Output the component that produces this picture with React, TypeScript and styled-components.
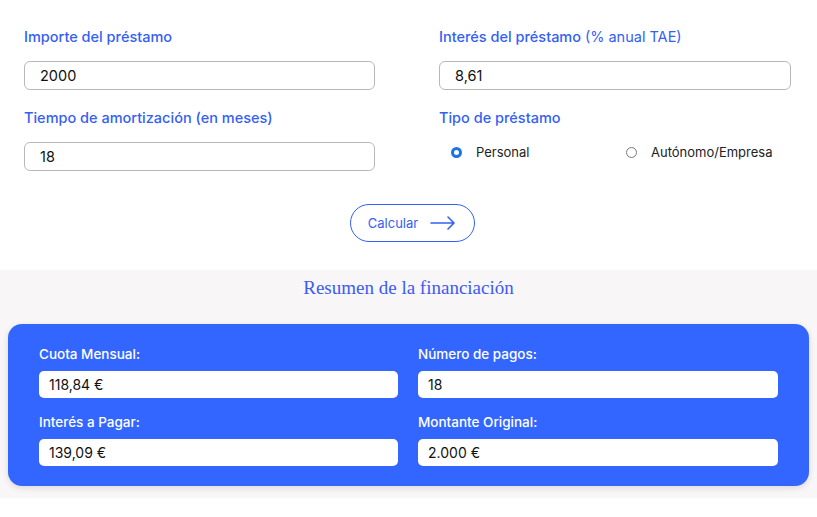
import React from "react";
import styled, { createGlobalStyle } from "styled-components";

const Global = createGlobalStyle`
  body { margin: 0; background: #fff; font-family: Inter, "Noto Sans", sans-serif; }
`;

const Form = styled.div`
  display: grid;
  grid-template-columns: 351px 352px;
  column-gap: 64px;
  padding: 26px 0 0 24px;
`;
const Field = styled.div`
  display: flex;
  flex-direction: column;
  margin-bottom: 17px;
`;
const Label = styled.div`
  color: #3460f5;
  font-size: 14.5px;
  font-weight: 500;
  height: 22px;
  line-height: 22px;
  margin-bottom: 13px;
  span { font-weight: 400; }
`;
const Input = styled.div`
  height: 27px;
  border: 1px solid #b8b8b8;
  border-radius: 6px;
  padding-left: 15px;
  display: flex;
  align-items: center;
  font-size: 14.5px;
  color: #111;
`;
const Radios = styled.div`
  display: grid;
  grid-template-columns: 175px 1fr;
  padding-left: 12px;
  margin-top: 2px;
`;
const Radio = styled.label`
  display: flex;
  align-items: center;
  gap: 14px;
  font-size: 13px;
  color: #222;
`;
const Dot = styled.span<{ $on?: boolean }>`
  width: 11px;
  height: 11px;
  border-radius: 50%;
  box-sizing: border-box;
  border: ${p => (p.$on ? "3px solid #1a73e8" : "1px solid #777")};
  background: #fff;
`;
const ButtonRow = styled.div`
  display: flex;
  justify-content: center;
  margin-top: 16px;
  padding-left: 7px;
`;
const Button = styled.button`
  width: 125px;
  height: 38px;
  border: 1px solid #3460f5;
  border-radius: 19px;
  background: #fff;
  color: #3460f5;
  font-family: Inter, sans-serif;
  font-size: 13px;
  display: flex;
  align-items: center;
  justify-content: center;
  gap: 12px;
`;
const Summary = styled.div`
  margin-top: 28px;
  background: #f8f6f6;
  padding: 6px 8px 8px;
  height: 214px;
`;
const Title = styled.h2`
  margin: 0 0 24px;
  text-align: center;
  font-family: "Liberation Serif", serif;
  font-weight: 400;
  font-size: 19px;
  color: #3b5bf5;
  line-height: 24px;
`;
const Card = styled.div`
  background: #3366ff;
  border-radius: 14px;
  padding: 20px 30px 20px 31px;
  display: grid;
  grid-template-columns: 359px 360px;
  column-gap: 20px;
  row-gap: 14px;
  box-shadow: 0 2px 6px rgba(0,0,0,0.12);
`;
const CField = styled.div`
  display: flex;
  flex-direction: column;
  gap: 6px;
`;
const CLabel = styled.div`
  color: #fff;
  font-size: 13.5px;
  font-weight: 500;
  line-height: 21px;
`;
const CValue = styled.div`
  background: #fff;
  border-radius: 5px;
  height: 27px;
  padding-left: 10px;
  display: flex;
  align-items: center;
  font-size: 14px;
  color: #111;
`;

const items = [
  ["Cuota Mensual:", "118,84 €"],
  ["Número de pagos:", "18"],
  ["Interés a Pagar:", "139,09 €"],
  ["Montante Original:", "2.000 €"],
];

export default function App() {
  return (
    <>
      <Global />
      <Form>
        <Field>
          <Label>Importe del préstamo</Label>
          <Input>2000</Input>
        </Field>
        <Field>
          <Label>Interés del préstamo <span>(% anual TAE)</span></Label>
          <Input>8,61</Input>
        </Field>
        <Field>
          <Label>Tiempo de amortización (en meses)</Label>
          <Input>18</Input>
        </Field>
        <Field>
          <Label>Tipo de préstamo</Label>
          <Radios>
            <Radio><Dot $on />Personal</Radio>
            <Radio><Dot />Autónomo/Empresa</Radio>
          </Radios>
        </Field>
      </Form>
      <ButtonRow>
        <Button>
          Calcular
          <svg width="26" height="14" viewBox="0 0 26 14" fill="none" stroke="#3460f5" strokeWidth="1.6" strokeLinecap="round" strokeLinejoin="round">
            <path d="M1 7h23M18 1l6 6-6 6" />
          </svg>
        </Button>
      </ButtonRow>
      <Summary>
        <Title>Resumen de la financiación</Title>
        <Card>
          {items.map(([l, v]) => (
            <CField key={l}>
              <CLabel>{l}</CLabel>
              <CValue>{v}</CValue>
            </CField>
          ))}
        </Card>
      </Summary>
    </>
  );
}
